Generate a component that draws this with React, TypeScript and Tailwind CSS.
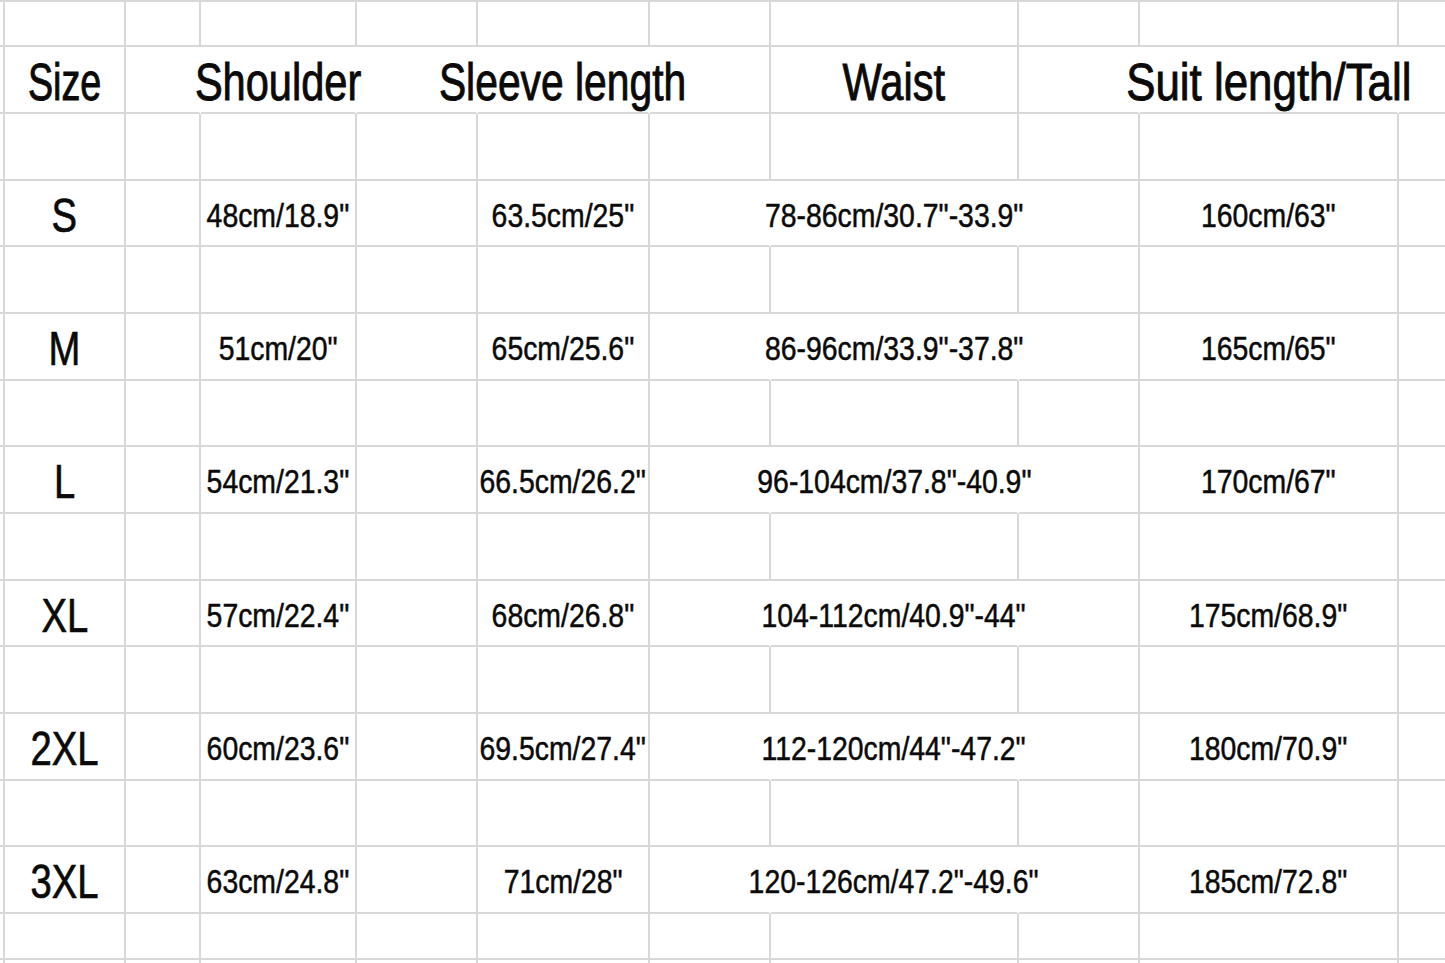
const cols =
  "grid grid-cols-[5px_121px_75px_156px_121px_172px_121px_248px_121px_259px_1fr]";

type Row = {
  h: string;
  kind: "empty" | "head" | "data";
  cells?: string[]; // size, shoulder, sleeve, waist, length
};

const rows: Row[] = [
  { h: "h-[45px]", kind: "empty" },
  { h: "h-[67px]", kind: "head", cells: ["Size", "Shoulder", "Sleeve length", "Waist", "Suit length/Tall"] },
  { h: "h-[67px]", kind: "empty" },
  { h: "h-[66px]", kind: "data", cells: ["S", '48cm/18.9"', '63.5cm/25"', '78-86cm/30.7"-33.9"', '160cm/63"'] },
  { h: "h-[67px]", kind: "empty" },
  { h: "h-[67px]", kind: "data", cells: ["M", '51cm/20"', '65cm/25.6"', '86-96cm/33.9"-37.8"', '165cm/65"'] },
  { h: "h-[66px]", kind: "empty" },
  { h: "h-[67px]", kind: "data", cells: ["L", '54cm/21.3"', '66.5cm/26.2"', '96-104cm/37.8"-40.9"', '170cm/67"'] },
  { h: "h-[67px]", kind: "empty" },
  { h: "h-[66px]", kind: "data", cells: ["XL", '57cm/22.4"', '68cm/26.8"', '104-112cm/40.9"-44"', '175cm/68.9"'] },
  { h: "h-[67px]", kind: "empty" },
  { h: "h-[67px]", kind: "data", cells: ["2XL", '60cm/23.6"', '69.5cm/27.4"', '112-120cm/44"-47.2"', '180cm/70.9"'] },
  { h: "h-[66px]", kind: "empty" },
  { h: "h-[67px]", kind: "data", cells: ["3XL", '63cm/24.8"', '71cm/28"', '120-126cm/47.2"-49.6"', '185cm/72.8"'] },
  { h: "h-[46px]", kind: "empty" },
];

// column index -> text slot
const slot: Record<number, number> = { 1: 0, 3: 1, 5: 2, 7: 3, 9: 4 };

// header squeeze per column, picked to match the widths in the sheet
const headScale = [
  "scale-x-[0.74]",
  "scale-x-[0.815]",
  "scale-x-[0.8]",
  "scale-x-[0.815]",
  "scale-x-[0.86]",
];

// right borders covered by overflowing text
const hiddenHead = [2, 3, 4, 5, 8, 9];
const hiddenData = [6, 7];

function Cell({ col, row, last }: { col: number; row: Row; last: boolean }) {
  const hidden =
    row.kind === "head"
      ? hiddenHead.includes(col)
      : row.kind === "data"
        ? hiddenData.includes(col)
        : false;
  const right =
    col === 10 ? "" : hidden ? "border-r-2 border-r-transparent" : "border-r-2 border-r-[#d8d8d8]";
  const bottom = last ? "" : "border-b-2 border-b-[#d8d8d8]";
  const s = slot[col];
  const text = s !== undefined && row.cells ? row.cells[s] : null;

  let span = null;
  if (text) {
    if (row.kind === "head") {
      span = (
        <span
          className={`inline-block whitespace-nowrap text-[51px] leading-none ${headScale[s]} translate-y-[3px] text-[#0a0a0a] [-webkit-text-stroke:0.9px_#0a0a0a]`}
        >
          {text}
        </span>
      );
    } else if (col === 1) {
      span = (
        <span className="inline-block whitespace-nowrap text-[49px] leading-none scale-x-[0.78] translate-y-[2px] text-[#0a0a0a] [-webkit-text-stroke:0.7px_#0a0a0a]">
          {text}
        </span>
      );
    } else {
      span = (
        <span className="inline-block whitespace-nowrap text-[33px] leading-none scale-x-[0.86] translate-y-[2px] text-[#0a0a0a] [-webkit-text-stroke:0.5px_#0a0a0a]">
          {text}
        </span>
      );
    }
  }

  return (
    <div className={`flex items-center justify-center min-w-0 ${right} ${bottom}`}>
      {span}
    </div>
  );
}

export default function App() {
  const colIdx = Array.from({ length: 11 }, (_, i) => i);
  return (
    <div className="w-[1445px] h-[963px] overflow-hidden bg-white border-t-2 border-t-[#d8d8d8] flex flex-col font-['Liberation_Sans',Arial,sans-serif]">
      {rows.map((row, r) => (
        <div key={r} className={`${cols} ${row.h} shrink-0`}>
          {colIdx.map((c) => (
            <Cell key={c} col={c} row={row} last={false} />
          ))}
        </div>
      ))}
      <div className={`${cols} flex-1`}>
        {colIdx.map((c) => (
          <Cell key={c} col={c} row={{ h: "", kind: "empty" }} last />
        ))}
      </div>
    </div>
  );
}
